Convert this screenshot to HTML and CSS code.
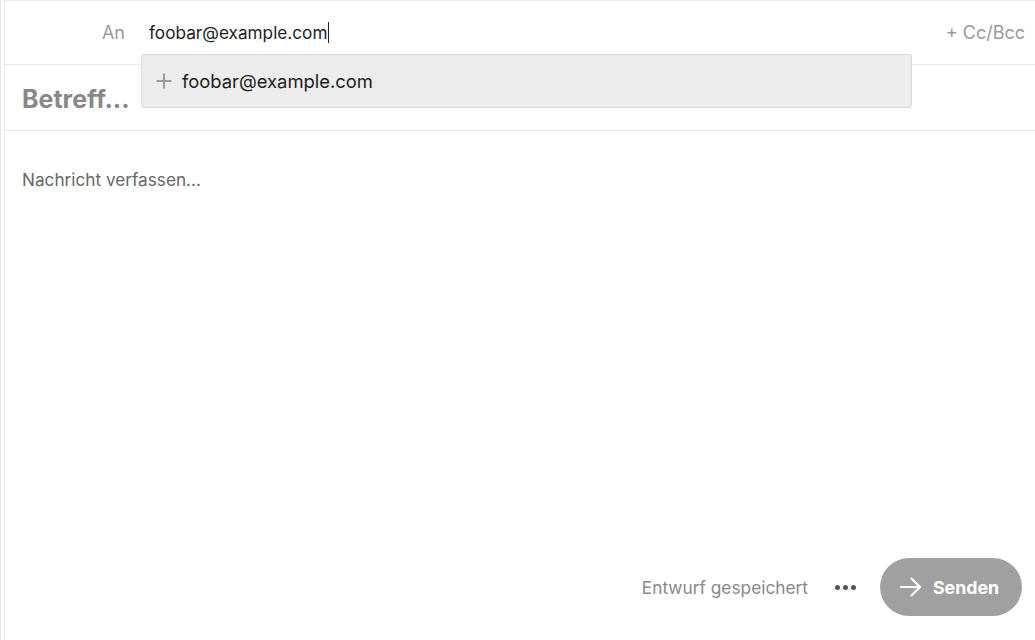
FILE: index.html
```html
<!DOCTYPE html>
<html lang="de">
<head>
<meta charset="utf-8">
<title>Nachricht verfassen</title>
<link rel="stylesheet" href="styles.css">
</head>
<body>
<div class="frame">
  <div class="composer">
    <div class="to-row">
      <span class="label">An</span>
      <div class="to-field">
        <span class="to-value">foobar@example.com</span><span class="caret"></span>
        <div class="suggest">
          <svg class="plus" width="18" height="18" viewBox="0 0 18 18"><path d="M9 1.5v15M1.5 9h15" stroke="#9a9a9a" stroke-width="2" fill="none"/></svg>
          <span>foobar@example.com</span>
        </div>
      </div>
      <span class="ccbcc">+ Cc/Bcc</span>
    </div>
    <div class="subject-row">
      <span class="subject">Betreff...</span>
    </div>
    <div class="body">
      <p class="placeholder">Nachricht verfassen...</p>
    </div>
    <div class="footer">
      <span class="saved">Entwurf gespeichert</span>
      <span class="more"><i></i><i></i><i></i></span>
      <button class="send">
        <svg width="24" height="24" viewBox="0 0 24 24"><path d="M2 12h19M12.5 3.5L21 12l-8.5 8.5" stroke="#fff" stroke-width="2.2" fill="none" stroke-linecap="round" stroke-linejoin="round"/></svg>
        <span>Senden</span>
      </button>
    </div>
  </div>
</div>
</body>
</html>
```
FILE: styles.css
```css
* { box-sizing: border-box; }
html, body { margin: 0; height: 100%; background: #fff; }
body { font-family: Inter, "Liberation Sans", Arial, sans-serif; color: #222; }
.frame {
  height: 640px;
  border-left: 1px solid #e6e6e6;
  padding-left: 3px;
}
.composer {
  height: 100%;
  border-left: 1px solid #e6e6e6;
  border-top: 1px solid #ededed;
  display: flex;
  flex-direction: column;
}
.to-row {
  height: 64px;
  flex: none;
  display: flex;
  align-items: center;
  border-bottom: 1px solid #e6e6e6;
  padding: 0 10px 0 0;
}
.label {
  width: 120px;
  text-align: right;
  font-size: 18px;
  color: #999;
}
.to-field {
  position: relative;
  flex: 1;
  margin-left: 24px;
  font-size: 17.2px;
  display: flex;
  align-items: center;
}
.to-value { color: #1e1e1e; }
.caret {
  display: inline-block;
  width: 1px;
  height: 21px;
  background: #222;
  margin-left: 1px;
}
.suggest {
  position: absolute;
  left: -8px;
  top: 32px;
  width: 771px;
  height: 54px;
  background: #ececec;
  border: 1px solid #dadada;
  border-radius: 3px;
  display: flex;
  align-items: center;
  padding-left: 13px;
  gap: 9px;
  font-size: 18.4px;
  color: #1e1e1e;
  z-index: 2;
}
.plus { flex: none; }
.ccbcc {
  margin-left: auto;
  font-size: 18px;
  color: #999;
}
.subject-row {
  height: 66px;
  flex: none;
  display: flex;
  align-items: center;
  padding-left: 17px;
  border-bottom: 1px solid #e6e6e6;
}
.subject {
  font-size: 25px;
  font-weight: bold;
  color: #888;
  padding-top: 2px;
}
.body { flex: 1; padding: 0 17px; }
.placeholder {
  margin: 38px 0 0;
  font-size: 17.2px;
  color: #666;
}
.footer {
  height: 82px;
  flex: none;
  display: flex;
  align-items: center;
  justify-content: flex-end;
  padding: 0 13px 24px 0;
}
.saved { font-size: 17.3px; color: #888; }
.more {
  display: flex;
  gap: 3px;
  margin: 0 24px 0 27px;
}
.more i {
  display: block;
  width: 5px;
  height: 5px;
  border-radius: 50%;
  background: #555;
}
.send {
  width: 142px;
  height: 58px;
  border: none;
  border-radius: 29px;
  background: #a0a0a0;
  color: #fff;
  font-family: inherit;
  font-size: 17.8px;
  font-weight: bold;
  display: flex;
  align-items: center;
  justify-content: center;
  gap: 10px;
  padding: 0 4px 0 0;
}
```
